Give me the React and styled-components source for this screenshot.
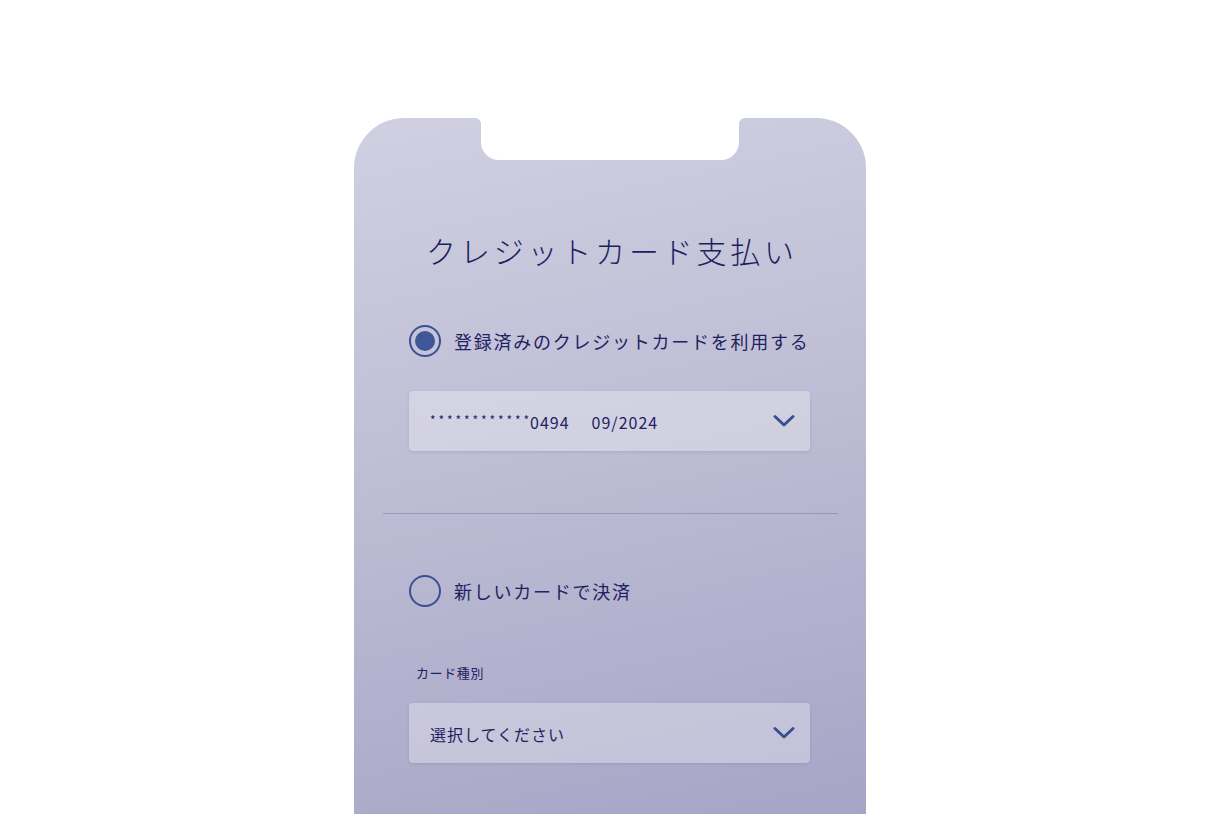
import styled, { createGlobalStyle } from "styled-components";

const GlobalStyle = createGlobalStyle`
  html, body {
    margin: 0;
    padding: 0;
    background: #ffffff;
    overflow: hidden;
  }
  body {
    font-family: "Noto Sans CJK JP", "Noto Sans", sans-serif;
    color: #1c1f5f;
  }
`;

const Page = styled.div`
  display: flex;
  justify-content: center;
  padding-top: 118px;
  height: 814px;
  box-sizing: border-box;
`;

const Phone = styled.div`
  position: relative;
  width: 512px;
  height: 760px;
  box-sizing: border-box;
  padding: 110px 56px 0 55px;
  border-radius: 50px 50px 0 0;
  background: linear-gradient(168deg, #d0d0e2 0%, #bdbcd4 45%, #a3a1c4 100%);
  display: flex;
  flex-direction: column;
`;

const Notch = styled.div`
  position: absolute;
  top: 0;
  left: 127px;
  width: 258px;
  height: 42px;
  background: #ffffff;
  border-radius: 0 0 18px 18px;

  &::before,
  &::after {
    content: "";
    position: absolute;
    top: 0;
    width: 7px;
    height: 7px;
  }
  &::before {
    left: -7px;
    background: radial-gradient(circle at 0 100%, transparent 7px, #ffffff 7.5px);
  }
  &::after {
    right: -7px;
    background: radial-gradient(circle at 100% 100%, transparent 7px, #ffffff 7.5px);
  }
`;

const Title = styled.h1`
  margin: 0;
  height: 44px;
  padding-left: 5px;
  font-size: 30px;
  line-height: 44px;
  font-weight: 300;
  letter-spacing: 3.8px;
  text-align: center;
  white-space: nowrap;
  color: #1b1e60;
`;

const RadioRow = styled.label`
  display: flex;
  align-items: center;
  gap: 13px;
  height: 32px;
  margin-top: ${(p) => p.$mt}px;
`;

const RadioCircle = styled.span`
  width: 32px;
  height: 32px;
  box-sizing: border-box;
  border-radius: 50%;
  border: 2px solid #3b4f93;
  display: flex;
  align-items: center;
  justify-content: center;
  flex-shrink: 0;

  &::after {
    content: "";
    width: 20px;
    height: 20px;
    border-radius: 50%;
    background: #3d5797;
    display: ${(p) => (p.$checked ? "block" : "none")};
  }
`;

const RadioText = styled.span`
  font-size: 18px;
  letter-spacing: 1.75px;
  white-space: nowrap;
  color: #1f2262;
`;

const Select = styled.div`
  display: flex;
  align-items: center;
  justify-content: space-between;
  height: 60px;
  box-sizing: border-box;
  padding: 0 15px 0 21px;
  margin-top: ${(p) => p.$mt}px;
  border-radius: 4px;
  background: rgba(255, 255, 255, 0.3);
  box-shadow: 0 1px 3px rgba(110, 108, 160, 0.25);
`;

const SelectText = styled.span`
  display: flex;
  align-items: baseline;
  font-size: 16px;
  letter-spacing: 1px;
  color: #1f2262;
  white-space: pre;
  padding-top: 2px;
`;

const Stars = styled.span`
  font-size: 12px;
  position: relative;
  top: -4px;
  letter-spacing: 2.9px;
  margin-right: -2px;
`;

const Expiry = styled.span`
  margin-left: 22px;
`;

const Divider = styled.hr`
  margin: 62px -28px 0 -26px;
  border: none;
  height: 1px;
  background: rgba(125, 122, 170, 0.55);
`;

const FieldLabel = styled.div`
  margin-top: 57px;
  padding-left: 7px;
  font-size: 13px;
  line-height: 18px;
  letter-spacing: 0.6px;
  color: #1f2262;
`;

const Chevron = () => (
  <svg width="22" height="14" viewBox="0 0 22 14" fill="none">
    <path
      d="M2 2.5 L11 11 L20 2.5"
      stroke="#3b4f8f"
      strokeWidth="3"
      strokeLinecap="round"
      strokeLinejoin="round"
    />
  </svg>
);

export default function App() {
  return (
    <>
      <GlobalStyle />
      <Page>
        <Phone>
          <Notch />
          <Title>クレジットカード支払い</Title>

          <RadioRow $mt={53}>
            <RadioCircle $checked />
            <RadioText>登録済みのクレジットカードを利用する</RadioText>
          </RadioRow>

          <Select $mt={34}>
            <SelectText>
              <Stars>************</Stars>0494<Expiry>09/2024</Expiry>
            </SelectText>
            <Chevron />
          </Select>

          <Divider />

          <RadioRow $mt={61}>
            <RadioCircle />
            <RadioText>新しいカードで決済</RadioText>
          </RadioRow>

          <FieldLabel>カード種別</FieldLabel>

          <Select $mt={21}>
            <SelectText>選択してください</SelectText>
            <Chevron />
          </Select>
        </Phone>
      </Page>
    </>
  );
}
